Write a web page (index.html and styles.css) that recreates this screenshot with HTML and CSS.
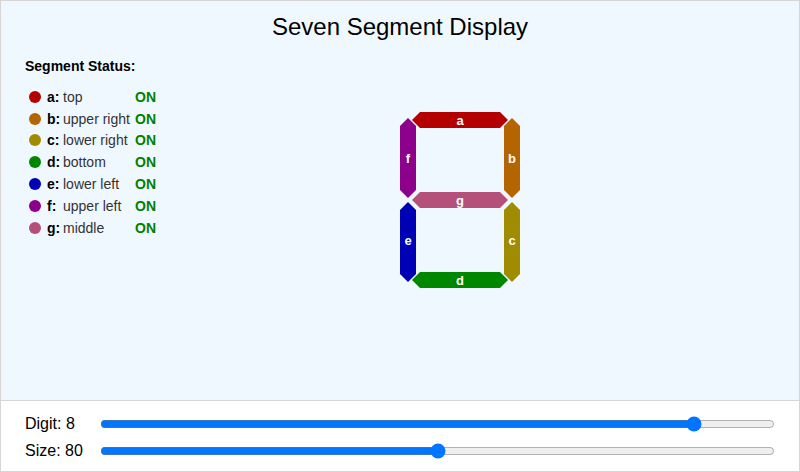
FILE: index.html
```html
<!DOCTYPE html>
<html lang="en">

<head>
    <meta charset="UTF-8">
    <meta name="viewport" content="width=device-width, initial-scale=1.0">
    <title>Seven Segment Display</title>
    <link rel="stylesheet" href="styles.css">
</head>

<body>
    <div class="sim">
        <div class="drawing">
            <h1>Seven Segment Display</h1>
            <div class="stage">
                <div class="status">
                    <h2>Segment Status:</h2>
                    <div class="rows">
                        <div class="row"><span class="dot seg-a"></span><b>a:</b><span class="desc">top</span><span class="on">ON</span></div>
                        <div class="row"><span class="dot seg-b"></span><b>b:</b><span class="desc">upper right</span><span class="on">ON</span></div>
                        <div class="row"><span class="dot seg-c"></span><b>c:</b><span class="desc">lower right</span><span class="on">ON</span></div>
                        <div class="row"><span class="dot seg-d"></span><b>d:</b><span class="desc">bottom</span><span class="on">ON</span></div>
                        <div class="row"><span class="dot seg-e"></span><b>e:</b><span class="desc">lower left</span><span class="on">ON</span></div>
                        <div class="row"><span class="dot seg-f"></span><b>f:</b><span class="desc">upper left</span><span class="on">ON</span></div>
                        <div class="row"><span class="dot seg-g"></span><b>g:</b><span class="desc">middle</span><span class="on">ON</span></div>
                    </div>
                </div>
                <svg class="digit" width="120" height="176" viewBox="0 0 120 176">
                    <!-- horizontal segments -->
                    <polygon class="seg-a" points="12,8 20,0 100,0 108,8 100,16 20,16" />
                    <polygon class="seg-g" points="12,88 20,80 100,80 108,88 100,96 20,96" />
                    <polygon class="seg-d" points="12,168 20,160 100,160 108,168 100,176 20,176" />
                    <!-- vertical segments -->
                    <polygon class="seg-f" points="8,6 16,14 16,78 8,86 0,78 0,14" />
                    <polygon class="seg-b" points="112,6 120,14 120,78 112,86 104,78 104,14" />
                    <polygon class="seg-e" points="8,90 16,98 16,162 8,170 0,162 0,98" />
                    <polygon class="seg-c" points="112,90 120,98 120,162 112,170 104,162 104,98" />
                    <text x="60" y="8">a</text>
                    <text x="112" y="46">b</text>
                    <text x="112" y="128">c</text>
                    <text x="60" y="168">d</text>
                    <text x="8" y="128">e</text>
                    <text x="8" y="46">f</text>
                    <text x="60" y="88">g</text>
                </svg>
            </div>
        </div>
        <div class="controls">
            <div class="control">
                <label for="digit">Digit: 8</label>
                <input type="range" id="digit" min="0" max="9" value="8">
            </div>
            <div class="control">
                <label for="size">Size: 80</label>
                <input type="range" id="size" min="40" max="120" value="80">
            </div>
        </div>
    </div>
</body>

</html>
```

FILE: styles.css
```css
body {
    margin: 0;
    font-family: "Liberation Sans", Arial, sans-serif;
}

.sim {
    width: 798px;
    border: 1px solid #d6d6d6;
}

.drawing {
    height: 399px;
    background-color: aliceblue;
    border-bottom: 1px solid #d6d6d6;
    overflow: hidden;
}

h1 {
    margin: 12px 0 0;
    text-align: center;
    font-size: 24px;
    font-weight: normal;
    line-height: 28px;
}

.stage {
    display: flex;
    margin-top: 17px;
    padding: 0 24px;
}

.status {
    width: 375px;
}

h2 {
    margin: 0;
    font-size: 14px;
    line-height: 16px;
}

.rows {
    margin-top: 12px;
}

.row {
    display: grid;
    grid-template-columns: 18px 16px 72px auto;
    align-items: center;
    padding-left: 4px;
    height: 21.8px;
    font-size: 14px;
}

.row .desc {
    color: #333;
}

.row .on {
    color: green;
    font-weight: bold;
}

.dot {
    width: 12px;
    height: 12px;
    border-radius: 50%;
}

.digit {
    margin-top: 54px;
}

.digit text {
    fill: white;
    font-size: 13px;
    font-weight: bold;
    text-anchor: middle;
    dominant-baseline: central;
}

/* segment colours, shared by the dots and the digit */
.seg-a { background-color: #b40000; fill: #b40000; }
.seg-b { background-color: #b46400; fill: #b46400; }
.seg-c { background-color: #a08c00; fill: #a08c00; }
.seg-d { background-color: #008700; fill: #008700; }
.seg-e { background-color: #0000b4; fill: #0000b4; }
.seg-f { background-color: #8c008c; fill: #8c008c; }
.seg-g { background-color: #b4507a; fill: #b4507a; }

.controls {
    height: 70px;
    padding: 9px 24px 0;
    box-sizing: border-box;
    background-color: white;
}

.control {
    display: flex;
    align-items: center;
    height: 27px;
}

.control label {
    width: 75px;
    font-size: 16px;
}

.control input {
    width: 675px;
    margin: 0;
}
```
